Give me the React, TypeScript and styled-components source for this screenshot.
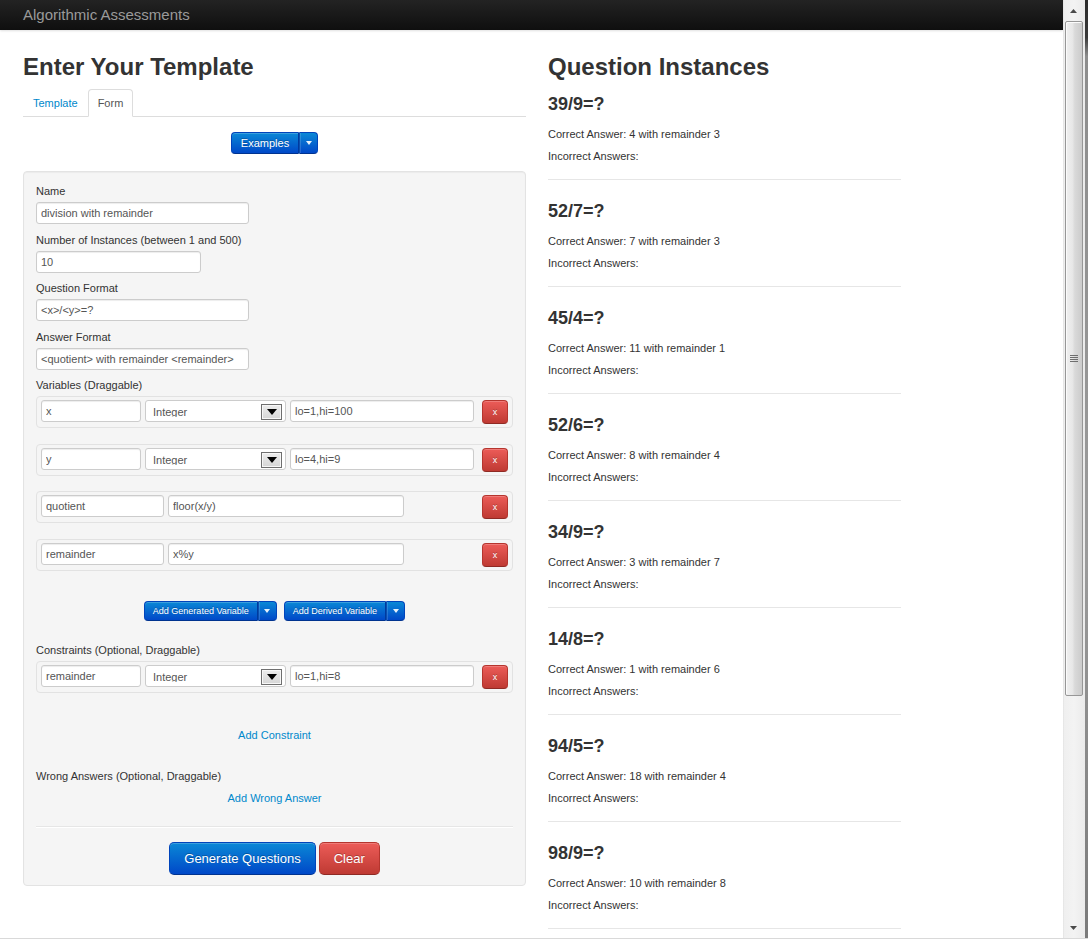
import React from "react";
import styled, { createGlobalStyle, css } from "styled-components";

const GlobalStyle = createGlobalStyle`
  html, body { margin: 0; padding: 0; overflow: hidden; background: #fff; }
  body {
    font-family: "Liberation Sans", Arial, Helvetica, sans-serif;
    font-size: 11px;
    line-height: 16px;
    color: #333;
  }
  * { box-sizing: border-box; }
`;

const FONT = `"Liberation Sans", Arial, Helvetica, sans-serif`;

const Window = styled.div`
  display: flex;
  width: 1088px;
  height: 939px;
  border-bottom: 1px solid #d9d9d9;
  overflow: hidden;
`;

const Viewport = styled.div`
  flex: 0 0 1063px;
  display: flex;
  flex-direction: column;
  overflow: hidden;
`;

const Navbar = styled.div`
  position: relative;
  z-index: 1;
  height: 30px;
  flex: none;
  background: linear-gradient(#232323, #0f0f0f);
  box-shadow: 0 1px 2px rgba(0, 0, 0, 0.12);
`;

const Brand = styled.div`
  padding-left: 23px;
  line-height: 30px;
  font-size: 15px;
  color: #9a9a9a;
`;

const Container = styled.div`
  display: flex;
  gap: 22px;
  padding: 19px 0 0 23px;
`;

const Column = styled.div`
  flex: 0 0 503px;
  width: 503px;
`;

const Title = styled.h2`
  margin: 0 0 4px;
  font-size: 24px;
  line-height: 36px;
  font-weight: bold;
  color: #333;
`;

const Tabs = styled.ul`
  list-style: none;
  margin: 0;
  padding: 0;
  display: flex;
  border-bottom: 1px solid #ddd;
`;

const TabItem = styled.li`
  margin-bottom: -1px;
`;

const TabLink = styled.a<{ $active?: boolean }>`
  display: block;
  padding: 0 9px;
  line-height: 26px;
  font-size: 11px;
  border: 1px solid transparent;
  border-radius: 4px 4px 0 0;
  color: #0088cc;
  text-decoration: none;
  cursor: pointer;
  ${(p) =>
    p.$active &&
    css`
      color: #555;
      background: #fff;
      border-color: #ddd #ddd transparent;
    `}
`;

const CenterBar = styled.div<{ $mt: number; $gap?: number }>`
  display: flex;
  justify-content: center;
  gap: ${(p) => p.$gap ?? 0}px;
  margin-top: ${(p) => p.$mt}px;
`;

const SplitGroup = styled.div`
  display: inline-flex;
`;

const primary = css`
  color: #fff;
  background: linear-gradient(#0a88d6, #0048c8);
  border: 1px solid #0044bb;
  border-bottom-color: #00338f;
  text-shadow: 0 -1px 0 rgba(0, 0, 0, 0.25);
  box-shadow: inset 0 1px 0 rgba(255, 255, 255, 0.2);
`;

const danger = css`
  color: #fff;
  background: linear-gradient(#ec5c58, #bf3a33);
  border: 1px solid #b5352e;
  border-bottom-color: #8f2a24;
  text-shadow: 0 -1px 0 rgba(0, 0, 0, 0.25);
  box-shadow: inset 0 1px 0 rgba(255, 255, 255, 0.2);
`;

const BaseBtn = styled.button`
  font-family: ${FONT};
  margin: 0;
  cursor: pointer;
  display: inline-flex;
  align-items: center;
  justify-content: center;
  white-space: nowrap;
`;

const SplitMain = styled(BaseBtn)<{ $h: number; $fs: number; $px: number }>`
  ${primary};
  height: ${(p) => p.$h}px;
  font-size: ${(p) => p.$fs}px;
  padding: 0 ${(p) => p.$px}px;
  border-radius: 4px 0 0 4px;
  border-right-color: #003a9e;
`;

const SplitCaret = styled(BaseBtn)<{ $h: number }>`
  ${primary};
  height: ${(p) => p.$h}px;
  width: 19px;
  padding: 0;
  border-left: 1px solid #0a4fb0;
  border-radius: 0 4px 4px 0;
  box-shadow: inset 1px 0 0 rgba(255, 255, 255, 0.15);
`;

const CaretShape = styled.span`
  width: 0;
  height: 0;
  border-left: 3px solid transparent;
  border-right: 3px solid transparent;
  border-top: 4px solid #fff;
  opacity: 0.9;
`;

const Well = styled.div`
  margin-top: 17px;
  background: #f5f5f5;
  border: 1px solid #e3e3e3;
  border-radius: 4px;
  padding: 11px 12px 10px;
  box-shadow: inset 0 1px 1px rgba(0, 0, 0, 0.04);
`;

const Field = styled.div`
  margin-bottom: 7.5px;
`;

const Label = styled.label<{ $mt?: number }>`
  display: block;
  line-height: 16px;
  font-size: 11px;
  color: #333;
  margin-top: ${(p) => p.$mt ?? 0}px;
  margin-bottom: 3px;
`;

const TextInput = styled.input<{ $w: number }>`
  display: block;
  flex: none;
  width: ${(p) => p.$w}px;
  height: 22px;
  margin: 0;
  padding: 0 4px;
  font-family: ${FONT};
  font-size: 11px;
  color: #555;
  background: #fff;
  border: 1px solid #ccc;
  border-radius: 3px;
  box-shadow: inset 0 1px 1px rgba(0, 0, 0, 0.075);
  outline: none;
`;

const RowList = styled.div`
  display: flex;
  flex-direction: column;
  gap: 15.5px;
`;

const VarRow = styled.div`
  display: flex;
  align-items: flex-start;
  gap: 4px;
  padding: 3px 4px;
  border: 1px solid #e2e2e2;
  border-radius: 4px;
  background: #f5f5f5;
`;

const SelectBox = styled.div`
  flex: none;
  display: flex;
  align-items: flex-start;
  width: 141px;
  height: 22px;
  padding: 3px 3px 0 7px;
  background: #fff;
  border: 1px solid #ccc;
  border-radius: 3px;
`;

const SelectText = styled.span`
  flex: 1;
  height: 13px;
  line-height: 17px;
  overflow: hidden;
  font-size: 11px;
  color: #555;
`;

const SelectButton = styled.span`
  flex: none;
  width: 21px;
  height: 16px;
  display: flex;
  align-items: center;
  justify-content: center;
  border: 1px solid #6f6f6f;
  background: linear-gradient(#ececec, #d6d6d6);
  box-shadow: inset 0 0 0 1px #f7f7f7;
`;

const DeleteBtn = styled(BaseBtn)`
  ${danger};
  margin-left: auto;
  width: 26px;
  height: 24px;
  padding: 0;
  font-size: 9px;
  border-radius: 4px;
`;

const AddLink = styled.a<{ $mt: number }>`
  display: block;
  text-align: center;
  line-height: 16px;
  font-size: 11px;
  color: #0088cc;
  text-decoration: none;
  margin-top: ${(p) => p.$mt}px;
  cursor: pointer;
`;

const Divider = styled.hr<{ $m: string }>`
  margin: ${(p) => p.$m};
  border: 0;
  border-top: 1px solid #e6e6e6;
  border-bottom: 1px solid #fff;
  height: 0;
`;

const LargeBtn = styled(BaseBtn)<{ $danger?: boolean }>`
  ${(p) => (p.$danger ? danger : primary)};
  padding: 8px 14px;
  line-height: 15px;
  font-size: 13px;
  border-radius: 5px;
`;

const InstanceList = styled.div`
  padding-top: 1px;
  width: 353px;
`;

const Instance = styled.div`
  display: flow-root;
`;

const Question = styled.h3`
  margin: 0 0 8px;
  font-size: 18px;
  line-height: 28px;
  font-weight: bold;
  color: #333;
`;

const Line = styled.p`
  margin: 0 0 6px;
  line-height: 16px;
  font-size: 11px;
  color: #333;
`;

/* Scrollbar */
const ScrollTrack = styled.div`
  flex: 0 0 22px;
  display: flex;
  flex-direction: column;
  align-items: flex-start;
  background: linear-gradient(90deg, #dedede 0, #efefef 1px, #f3f3f3 50%, #ebebeb 100%);
`;

const ArrowBox = styled.div<{ $h: number }>`
  width: 21px;
  height: ${(p) => p.$h}px;
  display: flex;
  align-items: center;
  justify-content: center;
  flex: none;
`;

const Thumb = styled.div`
  flex: none;
  margin-left: 1.5px;
  width: 18.5px;
  height: 675px;
  border: 1px solid #979797;
  border-radius: 2px;
  background: linear-gradient(90deg, #f0f0f0 0%, #e7e7e7 40%, #d9d9d9 55%, #cbcbcb 100%);
  box-shadow: inset 1px 1px 0 #fbfbfb;
  display: flex;
  align-items: center;
  justify-content: center;
`;

const TrackFill = styled.div`
  flex: 1;
`;

const Edge = styled.div`
  flex: 0 0 3px;
  background: linear-gradient(#2c2c2c 0, #3a3a3a 4%, #8d8d8d 6%, #9b9b9b 60%, #7a7a7a 100%);
`;

const Triangle = ({ down }: { down?: boolean }) => (
  <svg width="7" height="4" viewBox="0 0 7 4">
    <polygon points={down ? "0,0 7,0 3.5,4" : "0,4 7,4 3.5,0"} fill="#4a4a4a" />
  </svg>
);

const SelectTriangle = () => (
  <svg width="10" height="6" viewBox="0 0 10 6">
    <polygon points="0,0 10,0 5,6" fill="#000" />
  </svg>
);

const Grip = () => (
  <svg width="8" height="7" viewBox="0 0 8 7">
    {[0, 2, 4, 6].map((y) => (
      <rect key={y} x="0" y={y} width="8" height="1" fill="#6e6e6e" />
    ))}
  </svg>
);

type Generated = { name: string; type: string; params: string };
type Derived = { name: string; expr: string };

const generated: Generated[] = [
  { name: "x", type: "Integer", params: "lo=1,hi=100" },
  { name: "y", type: "Integer", params: "lo=4,hi=9" },
];

const derived: Derived[] = [
  { name: "quotient", expr: "floor(x/y)" },
  { name: "remainder", expr: "x%y" },
];

const constraints: Generated[] = [{ name: "remainder", type: "Integer", params: "lo=1,hi=8" }];

const instances = [
  { q: "39/9=?", a: "4 with remainder 3" },
  { q: "52/7=?", a: "7 with remainder 3" },
  { q: "45/4=?", a: "11 with remainder 1" },
  { q: "52/6=?", a: "8 with remainder 4" },
  { q: "34/9=?", a: "3 with remainder 7" },
  { q: "14/8=?", a: "1 with remainder 6" },
  { q: "94/5=?", a: "18 with remainder 4" },
  { q: "98/9=?", a: "10 with remainder 8" },
];

const GeneratedRow = ({ v }: { v: Generated }) => (
  <VarRow>
    <TextInput $w={100} defaultValue={v.name} readOnly />
    <SelectBox>
      <SelectText>{v.type}</SelectText>
      <SelectButton>
        <SelectTriangle />
      </SelectButton>
    </SelectBox>
    <TextInput $w={184} defaultValue={v.params} readOnly />
    <DeleteBtn>x</DeleteBtn>
  </VarRow>
);

const DerivedRow = ({ v }: { v: Derived }) => (
  <VarRow>
    <TextInput $w={123} defaultValue={v.name} readOnly />
    <TextInput $w={236} defaultValue={v.expr} readOnly />
    <DeleteBtn>x</DeleteBtn>
  </VarRow>
);

const Split = ({ label, h, fs, px }: { label: string; h: number; fs: number; px: number }) => (
  <SplitGroup>
    <SplitMain $h={h} $fs={fs} $px={px}>
      {label}
    </SplitMain>
    <SplitCaret $h={h}>
      <CaretShape />
    </SplitCaret>
  </SplitGroup>
);

export default function App() {
  return (
    <>
      <GlobalStyle />
      <Window>
        <Viewport>
          <Navbar>
            <Brand>Algorithmic Assessments</Brand>
          </Navbar>
          <Container>
            <Column>
              <Title>Enter Your Template</Title>
              <Tabs>
                <TabItem>
                  <TabLink>Template</TabLink>
                </TabItem>
                <TabItem>
                  <TabLink $active>Form</TabLink>
                </TabItem>
              </Tabs>
              <CenterBar $mt={15}>
                <Split label="Examples" h={22} fs={11} px={9} />
              </CenterBar>
              <Well>
                <Field>
                  <Label>Name</Label>
                  <TextInput $w={213} defaultValue="division with remainder" readOnly />
                </Field>
                <Field>
                  <Label>Number of Instances (between 1 and 500)</Label>
                  <TextInput $w={165} defaultValue="10" readOnly />
                </Field>
                <Field>
                  <Label>Question Format</Label>
                  <TextInput $w={213} defaultValue="<x>/<y>=?" readOnly />
                </Field>
                <Field>
                  <Label>Answer Format</Label>
                  <TextInput $w={213} defaultValue="<quotient> with remainder <remainder>" readOnly />
                </Field>
                <Label>Variables (Draggable)</Label>
                <RowList>
                  {generated.map((v) => (
                    <GeneratedRow key={v.name} v={v} />
                  ))}
                  {derived.map((v) => (
                    <DerivedRow key={v.name} v={v} />
                  ))}
                </RowList>
                <CenterBar $mt={30.5} $gap={7}>
                  <Split label="Add Generated Variable" h={20} fs={9} px={8} />
                  <Split label="Add Derived Variable" h={20} fs={9} px={8} />
                </CenterBar>
                <Label $mt={21}>Constraints (Optional, Draggable)</Label>
                <RowList>
                  {constraints.map((v) => (
                    <GeneratedRow key={v.name} v={v} />
                  ))}
                </RowList>
                <AddLink $mt={34}>Add Constraint</AddLink>
                <Label $mt={25}>Wrong Answers (Optional, Draggable)</Label>
                <AddLink $mt={6}>Add Wrong Answer</AddLink>
                <Divider $m="20px 0 0" />
                <CenterBar $mt={14} $gap={3}>
                  <LargeBtn>Generate Questions</LargeBtn>
                  <LargeBtn $danger>Clear</LargeBtn>
                </CenterBar>
              </Well>
            </Column>
            <Column>
              <Title>Question Instances</Title>
              <InstanceList>
                {instances.map((it) => (
                  <Instance key={it.q}>
                    <Question>{it.q}</Question>
                    <Line>Correct Answer: {it.a}</Line>
                    <Line>Incorrect Answers:</Line>
                    <Divider $m="15px 0 16px" />
                  </Instance>
                ))}
              </InstanceList>
            </Column>
          </Container>
        </Viewport>
        <ScrollTrack>
          <ArrowBox $h={21}>
            <Triangle />
          </ArrowBox>
          <Thumb>
            <Grip />
          </Thumb>
          <TrackFill />
          <ArrowBox $h={20}>
            <Triangle down />
          </ArrowBox>
        </ScrollTrack>
        <Edge />
      </Window>
    </>
  );
}
